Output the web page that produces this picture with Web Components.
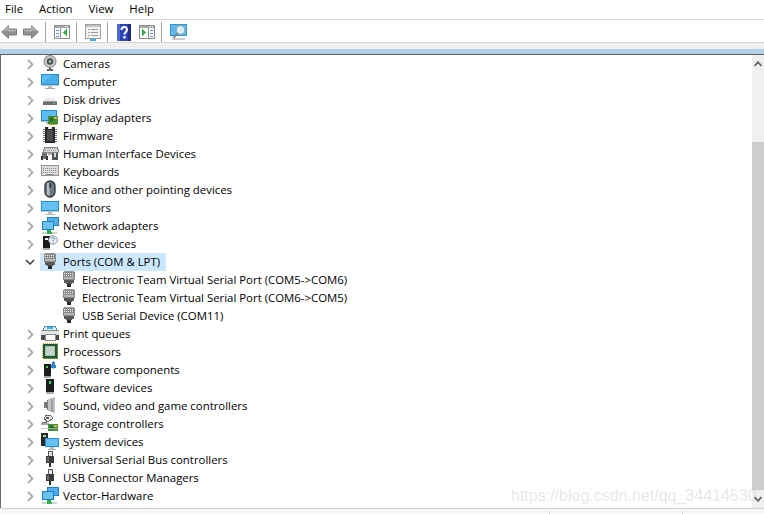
<!DOCTYPE html>
<html lang="en"><head><meta charset="utf-8"><title>Device Manager</title>
<style>html,body{margin:0;height:100%;overflow:hidden;background:#fff}</style></head>
<body><dm-app></dm-app>
<script>
const ICONS={
back:`<svg width="16" height="14" viewBox="0 0 16 14"><path d="M.7 7 7.500 .8v3.200h8v6h-8v3.200z" fill="#8f8f8f" stroke="#7b7b7b"/><path d="M3 6 7 3v2.500h8" fill="none" stroke="#bdbdbd" stroke-width="1.300"/></svg>`,
forward:`<svg width="16" height="14" viewBox="0 0 16 14"><path d="M15.300 7 8.500 .8v3.200h-8v6h8v3.200z" fill="#8f8f8f" stroke="#7b7b7b"/><path d="M13 6 9 3v2.500H1" fill="none" stroke="#bdbdbd" stroke-width="1.300"/></svg>`,
panel1:`<svg width="16" height="14" viewBox="0 0 16 14" shape-rendering="crispEdges"><rect x=".5" y=".5" width="15" height="13" fill="#fff" stroke="#8c8c8c"/><rect x="1" y="1" width="14" height="2" fill="#a9a9a9"/><rect x="11" y="1" width="1" height="1" fill="#fff"/><rect x="13" y="1" width="1" height="1" fill="#fff"/><rect x="6" y="3" width="1" height="10" fill="#8c8c8c"/><path d="M2 5h3M2 8h3M2 11h3" stroke="#5f8fc5"/><path d="M13 4v7l-4-3.500z" fill="#2fb24a"/></svg>`,
props:`<svg width="16" height="17" viewBox="0 0 16 17" shape-rendering="crispEdges"><rect x=".5" y=".5" width="15" height="14" fill="#f4f4f4" stroke="#9b9b9b"/><rect x="1" y="1" width="14" height="2" fill="#c4c4c4"/><path d="M3 5h2M6 5h7M3 8h2M6 8h7M3 11h2M6 11h7" stroke="#9a9a9a"/><rect x="5" y="15" width="6" height="2" fill="#35b4ee"/></svg>`,
help:`<svg width="14" height="17" viewBox="0 0 14 17"><rect width="14" height="17" fill="#2b45b5"/><rect x="0" y="0" width="3" height="17" fill="#4c68d2"/><rect x="11" y="0" width="3" height="17" fill="#1c2f8c"/><path d="M4.500 6c0-4 5.500-4 5.500-.5 0 2.500-2.500 2.500-2.500 5" fill="none" stroke="#fff" stroke-width="2"/><rect x="6.300" y="12" width="2.300" height="2.500" fill="#fff"/></svg>`,
panel2:`<svg width="16" height="14" viewBox="0 0 16 14" shape-rendering="crispEdges"><rect x=".5" y=".5" width="15" height="13" fill="#fff" stroke="#8c8c8c"/><rect x="1" y="1" width="14" height="2" fill="#a9a9a9"/><rect x="11" y="1" width="1" height="1" fill="#fff"/><rect x="13" y="1" width="1" height="1" fill="#fff"/><rect x="9" y="3" width="1" height="10" fill="#8c8c8c"/><path d="M11 5h3M11 8h3M11 11h3" stroke="#5f8fc5"/><path d="M3 4v7l4-3.500z" fill="#2fb24a"/></svg>`,
scan:`<svg width="17" height="16" viewBox="0 0 17 16"><rect x=".5" y=".5" width="16" height="11" fill="#62b8ea" stroke="#2f96d6"/><path d="M2 15h13" stroke="#a8a8a8" stroke-width="1.200"/><circle cx="10.500" cy="6" r="4.300" fill="#d9eef9" stroke="#93a7b3" stroke-width="1.200"/><path d="M7.500 9.300 3.500 14" stroke="#7d7d7d" stroke-width="1.800"/></svg>`,
camera:`<svg width="16" height="16" viewBox="0 0 16 16"><path d="M5 15h6" stroke="#333" stroke-width="1.500"/><path d="M8 12v3" stroke="#666" stroke-width="2"/><circle cx="8" cy="6.500" r="6" fill="#c8c8c8" stroke="#7c7c7c"/><circle cx="8" cy="6.500" r="3.200" fill="#4d4d4d"/><circle cx="8" cy="6.500" r="1.300" fill="#9cc"/></svg>`,
computer:`<svg width="18" height="16" viewBox="0 0 18 16" shape-rendering="crispEdges"><rect x="0" y="1" width="18" height="11" fill="#1e8fd8"/><rect x="1" y="2" width="16" height="9" fill="#5fbcf0"/><path d="M1 11 12 2h5v9z" fill="#4aaee8"/><rect x="0" y="12" width="18" height="1" fill="#c8c8c8"/><rect x="7" y="13" width="4" height="2" fill="#c0c0c0"/><rect x="4" y="15" width="10" height="1" fill="#a8a8a8"/></svg>`,
disk:`<svg width="16" height="16" viewBox="0 0 16 16" shape-rendering="crispEdges"><path d="M2 10 4 7h8l2 3z" fill="#e8e8e8"/><rect x="1" y="10" width="14" height="4" fill="#6d6d6d"/><rect x="1" y="10" width="14" height="1" fill="#a0a0a0"/><rect x="11" y="12" width="2" height="1" fill="#4fd05a"/></svg>`,
display:`<svg width="18" height="16" viewBox="0 0 18 16" shape-rendering="crispEdges"><rect x="0" y="1" width="16" height="11" fill="#1e8fd8"/><rect x="1" y="2" width="14" height="9" fill="#5fbcf0"/><rect x="0" y="12" width="16" height="1" fill="#bbb"/><rect x="5" y="13" width="6" height="2" fill="#bbb"/><rect x="7" y="7" width="10" height="8" fill="#3f8f38"/><rect x="9" y="9" width="3" height="3" fill="#2d5f2a"/><rect x="13" y="8" width="3" height="2" fill="#e0b040"/><rect x="8" y="15" width="8" height="1" fill="#c9a030"/></svg>`,
firmware:`<svg width="16" height="16" viewBox="0 0 16 16" shape-rendering="crispEdges"><rect x="3" y="0" width="10" height="16" fill="#2a2a2a"/><path d="M6 0h4v2H6z" fill="#e8e8e8"/><rect x="5" y="3" width="6" height="11" fill="#4d4d4d"/><path d="M1 2h2M1 4h2M1 6h2M1 8h2M1 10h2M1 12h2M1 14h2M13 2h2M13 4h2M13 6h2M13 8h2M13 10h2M13 12h2M13 14h2" stroke="#777"/></svg>`,
hid:`<svg width="18" height="16" viewBox="0 0 18 16" shape-rendering="crispEdges"><path d="M2 7 4 2h12l2 5z" fill="#d8d8d8" stroke="#8a8a8a"/><path d="M5 3h9M4 5h11" stroke="#9a9a9a" stroke-dasharray="1 1"/><rect x="1" y="8" width="5" height="6" fill="#707070"/><rect x="0" y="11" width="2" height="4" fill="#333"/><rect x="5" y="11" width="2" height="4" fill="#333"/><rect x="11" y="8" width="6" height="7" fill="#555"/><rect x="13" y="8" width="2" height="4" fill="#ddd"/><rect x="7" y="8" width="4" height="2" fill="#aaa"/></svg>`,
keyboard:`<svg width="18" height="12" viewBox="0 0 18 12" shape-rendering="crispEdges"><rect x=".5" y=".5" width="17" height="10" fill="#dcdcdc" stroke="#949494"/><path d="M2 3h14M2 5h14M2 7h14" stroke="#8f8f8f" stroke-dasharray="1 1"/><path d="M5 9h8" stroke="#8f8f8f"/></svg>`,
mouse:`<svg width="12" height="18" viewBox="0 0 12 18"><rect x="1" y="1" width="10" height="16" rx="5" fill="#6f7986" stroke="#2f343a" stroke-width="1.300"/><rect x="3" y="2.500" width="2.500" height="13" rx="1.200" fill="#b4bec9"/><rect x="5.300" y="3" width="1.600" height="5" rx=".8" fill="#2b2f33"/></svg>`,
monitor:`<svg width="18" height="16" viewBox="0 0 18 16" shape-rendering="crispEdges"><rect x="0" y="2" width="18" height="10" fill="#1e8fd8"/><rect x="1" y="3" width="16" height="8" fill="#66c0f2"/><rect x="0" y="12" width="18" height="1" fill="#c8c8c8"/><rect x="7" y="13" width="4" height="2" fill="#c0c0c0"/><rect x="4" y="15" width="10" height="1" fill="#b5b5b5"/></svg>`,
network:`<svg width="18" height="17" viewBox="0 0 18 17" shape-rendering="crispEdges"><rect x="6" y="0" width="12" height="9" fill="#1f7fc4"/><rect x="7" y="1" width="10" height="7" fill="#52aeea"/><rect x="1" y="4" width="12" height="9" fill="#1f7fc4"/><rect x="2" y="5" width="10" height="7" fill="#6cc0f2"/><rect x="6" y="13" width="4" height="2" fill="#2fa84a"/><rect x="1" y="15" width="15" height="2" fill="#c9d8c9"/><rect x="6" y="15" width="5" height="2" fill="#37b254"/></svg>`,
other:`<svg width="16" height="16" viewBox="0 0 16 16"><g shape-rendering="crispEdges"><rect x="1" y="1" width="7" height="12" fill="#1c1c1c"/><rect x="3" y="3" width="3" height="2" fill="#eee"/><rect x="1" y="13" width="7" height="2" fill="#aaa"/></g><circle cx="11" cy="5" r="4.300" fill="#f2f2f2" stroke="#9a9a9a"/><path d="M9.500 4c0-2 3-2 3 0 0 1-1.500 1-1.500 2.500M11 7.500v1" fill="none" stroke="#3a78c8"/></svg>`,
port:`<svg width="12" height="16" viewBox="0 0 12 16" shape-rendering="crispEdges"><rect x="0" y="1" width="12" height="8" fill="#8a8a8a"/><rect x="1" y="0" width="10" height="1" fill="#9a9a9a"/><path d="M1 2h10M1 4h10" stroke="#efefef" stroke-dasharray="1 1"/><rect x="1" y="6" width="10" height="2" fill="#b5b5b5"/><rect x="1" y="9" width="10" height="3" fill="#5a5a5a"/><rect x="3" y="12" width="6" height="1" fill="#4f4f4f"/><rect x="4" y="13" width="4" height="3" fill="#2c2c2c"/></svg>`,
printer:`<svg width="18" height="16" viewBox="0 0 18 16" shape-rendering="crispEdges"><path d="M4 1h10l2 4H2z" fill="#dff0f8" stroke="#5a8bb0"/><rect x="6" y="2" width="6" height="2" fill="#2db8e8"/><rect x="0" y="5" width="18" height="5" fill="#e4e4e4"/><rect x="0" y="5" width="18" height="1" fill="#8a8a8a"/><rect x="0" y="10" width="4" height="5" fill="#4a4a4a"/><rect x="14" y="10" width="4" height="5" fill="#4a4a4a"/><rect x="4" y="9" width="10" height="6" fill="#fff" stroke="#8a8a8a"/></svg>`,
cpu:`<svg width="16" height="16" viewBox="0 0 16 16" shape-rendering="crispEdges"><rect x=".5" y=".5" width="15" height="15" fill="#1f6a3a" stroke="#c9a227" stroke-dasharray="1 1"/><rect x="1" y="1" width="14" height="14" fill="#1c5a35"/><rect x="3" y="3" width="10" height="10" fill="#a9bdb1"/><rect x="4" y="4" width="8" height="8" fill="#c7d4cc"/></svg>`,
swcomp:`<svg width="14" height="17" viewBox="0 0 14 17" shape-rendering="crispEdges"><rect x="1" y="3" width="7" height="12" fill="#1d1d1d"/><rect x="3" y="5" width="2" height="2" fill="#38d860"/><rect x="1" y="15" width="7" height="2" fill="#a8a8a8"/><rect x="9" y="1" width="3" height="3" fill="#2f86d8"/><rect x="8" y="4" width="5" height="3" fill="#2f86d8"/><rect x="10" y="0" width="1" height="8" fill="#2f86d8"/></svg>`,
swdev:`<svg width="8" height="16" viewBox="0 0 8 16" shape-rendering="crispEdges"><rect x="0" y="0" width="8" height="13" fill="#1d1d1d"/><rect x="3" y="2" width="2" height="3" fill="#38d860"/><rect x="0" y="13" width="8" height="2" fill="#b0b0b0"/></svg>`,
sound:`<svg width="12" height="16" viewBox="0 0 12 16" shape-rendering="crispEdges"><path d="M0 5h3V3l1-1v12l-1-1v-2H0z" fill="#7a7a7a"/><path d="M4 2l7-2v16l-7-2z" fill="#c2c2c2"/><path d="M7 1.500h2v13H7z" fill="#9d9d9d"/></svg>`,
storage:`<svg width="18" height="17" viewBox="0 0 18 17" shape-rendering="crispEdges"><path d="M5 0h4l3 3-5 4-4-3z" fill="#eee" stroke="#666"/><rect x="5" y="2" width="3" height="2" fill="#555"/><rect x="0" y="8" width="8" height="2" fill="#aaa"/><rect x="1" y="7" width="5" height="1" fill="#666"/><rect x="7" y="9" width="10" height="7" fill="#3f8f38"/><rect x="9" y="11" width="3" height="3" fill="#2d5f2a"/><rect x="13" y="10" width="3" height="2" fill="#e0b040"/><rect x="0" y="13" width="18" height="1" fill="#c0c0c0" opacity=".7"/></svg>`,
system:`<svg width="18" height="17" viewBox="0 0 18 17" shape-rendering="crispEdges"><rect x="0" y="0" width="7" height="13" fill="#2a2a2a"/><rect x="2" y="2" width="3" height="2" fill="#8fe08f"/><rect x="4" y="5" width="14" height="9" fill="#1e8fd8"/><rect x="5" y="6" width="12" height="7" fill="#66c0f2"/><rect x="9" y="14" width="4" height="2" fill="#bbb"/><rect x="7" y="16" width="8" height="1" fill="#aaa"/></svg>`,
usb:`<svg width="8" height="16" viewBox="0 0 8 16" shape-rendering="crispEdges"><rect x="2" y="0" width="4" height="5" fill="#e8e8e8" stroke="#555"/><rect x="0" y="5" width="8" height="7" fill="#3a3a3a"/><rect x="1" y="6" width="2" height="5" fill="#6a6a6a"/><rect x="3" y="12" width="2" height="4" fill="#2c2c2c"/></svg>`
};
const chev=(open)=>open?
`<svg width="10" height="6" viewBox="0 0 10 6"><path d="M1 1l4 4 4-4" fill="none" stroke="#3f3f3f" stroke-width="1.500"/></svg>`:
`<svg width="7" height="11" viewBox="0 0 7 11"><path d="M1 1l4.500 4.500L1 10" fill="none" stroke="#a0a0a0" stroke-width="1.700"/></svg>`;

function el(name,html){customElements.define(name,class extends HTMLElement{
  constructor(){super();this.attachShadow({mode:'open'}).innerHTML=html;}
});}

el('dm-menubar',`<style>
:host{display:flex;height:20px;align-items:center;padding-left:5px;gap:16px;box-sizing:border-box;border-bottom:1px solid #d9d9d9;background:#fff}
</style><slot></slot>`);
el('dm-menu',`<style>:host{display:block;line-height:15px;padding-bottom:3px;color:#000}</style><slot></slot>`);

customElements.define('dm-tool',class extends HTMLElement{
  connectedCallback(){const s=this.attachShadow({mode:'open'});
  const pl=this.getAttribute('pl')||0,pr=this.getAttribute('pr')||0;
  s.innerHTML=`<style>:host{display:flex;align-items:center;justify-content:center;height:20px;box-sizing:border-box;width:${this.getAttribute('w')}px;padding:0 ${pr}px 0 ${pl}px}svg{display:block}</style>${ICONS[this.getAttribute('icon')]}`;}
});
el('dm-sep',`<style>:host{display:block;width:1px;height:20px;background:#a5a5a5}</style>`);
el('dm-toolbar',`<style>
:host{display:flex;align-items:center;height:23px;box-sizing:border-box;padding-top:2px;border-bottom:1px solid #d9d9d9;background:#fff}
</style><slot></slot>`);
el('dm-band',`<style>:host{display:block;height:12px;background:linear-gradient(#f0f0f0 0 6px,#b5cee8 6px 11px,#5f5f5f 11px);flex:none}</style>`);

customElements.define('dm-row',class extends HTMLElement{
  connectedCallback(){const s=this.attachShadow({mode:'open'});
  const open=this.hasAttribute('open'),child=this.hasAttribute('child'),sel=this.hasAttribute('selected');
  s.innerHTML=`<style>
  :host{display:flex;align-items:center;height:18px}
  .ch{width:20px;margin-left:19px;display:flex;justify-content:center;align-items:center;flex:none}
  .ic{width:18px;height:18px;display:flex;align-items:center;justify-content:center;flex:none;padding-left:${child?0:1}px;margin-top:-2px}
  .lb{display:flex;align-items:center;height:18px;white-space:nowrap;padding:0 ${sel?6:3}px 0 0;${sel?'background:#cce8ff;':''}color:#000}
  .t{margin-left:${child?4:4}px;padding-bottom:1px}
  .ind{width:59px;flex:none}
  svg{display:block}
  </style>${child?`<span class="ind"></span>`:`<span class="ch">${chev(open)}</span>`}
  <span class="lb"><span class="ic">${ICONS[this.getAttribute('icon')]}</span><span class="t"><slot></slot></span></span>`;}
});
el('dm-tree',`<style>:host{display:block;flex:1;min-width:0;overflow:hidden;background:#fff}</style><slot></slot>`);
el('dm-scrollbar',`<style>
:host{display:flex;flex-direction:column;width:12px;flex:none;background:#f0f0f0}
.a{height:17px;display:flex;align-items:center;justify-content:center;flex:none}
.sp{height:70px;flex:none}.th{flex:1;background:#cdcdcd}
.b{height:18px}
</style><div class="a"><svg width="8" height="6" viewBox="0 0 8 6"><path d="M.5 5 4 1.200 7.500 5" fill="none" stroke="#606060" stroke-width="1.800"/></svg></div><div class="sp"></div><div class="th"></div><div class="a b"><svg width="8" height="6" viewBox="0 0 8 6"><path d="M.5 1 4 4.800 7.500 1" fill="none" stroke="#606060" stroke-width="1.800"/></svg></div>`);
el('dm-status',`<style>
:host{display:flex;height:6px;flex:none;box-sizing:border-box;border-top:1px solid #d4d4d4;padding-top:2px;background:#f7f7f7}
i{display:block;height:100%;border-right:1px solid #d4d4d4}
</style><i style="width:549px"></i><i style="width:132px"></i>`);
el('dm-watermark',`<style>:host{position:absolute;left:511px;top:486px;font:16px/20px "Liberation Sans",sans-serif;color:rgba(150,150,150,.24);white-space:nowrap;pointer-events:none}</style><slot></slot>`);

customElements.define('dm-app',class extends HTMLElement{
  constructor(){super();
  const rows=[['camera','Cameras'],['computer','Computer'],['disk','Disk drives'],['display','Display adapters'],['firmware','Firmware'],['hid','Human Interface Devices'],['keyboard','Keyboards'],['mouse','Mice and other pointing devices'],['monitor','Monitors'],['network','Network adapters'],['other','Other devices'],['port','Ports (COM &amp; LPT)','open selected'],['port','Electronic Team Virtual Serial Port (COM5-&gt;COM6)','child'],['port','Electronic Team Virtual Serial Port (COM6-&gt;COM5)','child'],['port','USB Serial Device (COM11)','child'],['printer','Print queues'],['cpu','Processors'],['swcomp','Software components'],['swdev','Software devices'],['sound','Sound, video and game controllers'],['storage','Storage controllers'],['system','System devices'],['usb','Universal Serial Bus controllers'],['usb','USB Connector Managers'],['network','Vector-Hardware']];
  this.attachShadow({mode:'open'}).innerHTML=`<style>
  :host{display:flex;flex-direction:column;height:514px;width:764px;position:relative;font:11.400px/16px "Open Sans",sans-serif;color:#000;overflow:hidden}
  .main{display:flex;flex:1;min-height:0;border-left:1px solid #6a6a6a}
  </style>
  <dm-menubar><dm-menu>File</dm-menu><dm-menu>Action</dm-menu><dm-menu>View</dm-menu><dm-menu>Help</dm-menu></dm-menubar>
  <dm-toolbar>
    <dm-tool w="17" icon="back"></dm-tool><dm-tool w="28" icon="forward"></dm-tool><dm-sep></dm-sep>
    <dm-tool w="30" pl="2" icon="panel1"></dm-tool><dm-sep></dm-sep>
    <dm-tool w="30" pl="2" icon="props"></dm-tool><dm-sep></dm-sep>
    <dm-tool w="31" icon="help"></dm-tool><dm-tool w="22" pr="6" icon="panel2"></dm-tool><dm-sep></dm-sep>
    <dm-tool w="32" icon="scan"></dm-tool>
  </dm-toolbar>
  <dm-band></dm-band>
  <div class="main"><dm-tree>${rows.map(r=>`<dm-row icon="${r[0]}" ${r[2]||''}>${r[1]}</dm-row>`).join('')}</dm-tree><dm-scrollbar></dm-scrollbar></div>
  <dm-status></dm-status>
  <dm-watermark>https://blog.csdn.net/qq_34414530</dm-watermark>`;}
});
</script></body></html>
